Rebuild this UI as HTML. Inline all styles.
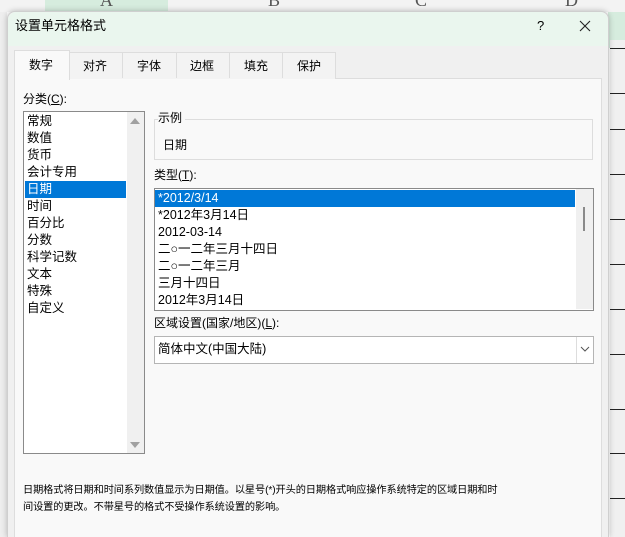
<!DOCTYPE html>
<html style="width:625px;height:537px;overflow:hidden"><head><meta charset="utf-8"><style>
*{margin:0;padding:0;box-sizing:border-box}
body{width:625px;height:537px;overflow:hidden;background:#fff;font-family:"Liberation Sans","Noto Sans CJK SC",sans-serif;font-size:12px;color:#000;position:relative}
.a{position:absolute}
.t{position:absolute;white-space:nowrap;line-height:17px}
</style></head><body>
<div class="a" style="left:0;top:0;width:625px;height:12px;background:#f3f3f3"></div>
<div class="a" style="left:45px;top:0;width:123px;height:12px;background:#d6ecde"></div>
<div class="t" style="left:100px;top:-8px;font-family:'Liberation Serif',serif;font-size:18px;color:#555">A</div>
<div class="t" style="left:268px;top:-8px;font-family:'Liberation Serif',serif;font-size:18px;color:#555">B</div>
<div class="t" style="left:415px;top:-8px;font-family:'Liberation Serif',serif;font-size:18px;color:#555">C</div>
<div class="t" style="left:565px;top:-8px;font-family:'Liberation Serif',serif;font-size:18px;color:#555">D</div>
<div class="a" style="left:608px;top:12px;width:17px;height:36px;background:#d6ecde"></div>
<div class="a" style="left:610px;top:40px;width:15px;height:497px;background:#f0f0f0"></div>
<div class="a" style="left:610px;top:48px;width:15px;border-top:1px solid #222"></div>
<div class="a" style="left:610px;top:93px;width:15px;border-top:1px solid #222"></div>
<div class="a" style="left:610px;top:129px;width:15px;border-top:1px solid #222"></div>
<div class="a" style="left:610px;top:174px;width:15px;border-top:1px solid #222"></div>
<div class="a" style="left:610px;top:219px;width:15px;border-top:1px solid #222"></div>
<div class="a" style="left:610px;top:264px;width:15px;border-top:1px solid #222"></div>
<div class="a" style="left:610px;top:309px;width:15px;border-top:1px solid #222"></div>
<div class="a" style="left:610px;top:354px;width:15px;border-top:1px solid #222"></div>
<div class="a" style="left:610px;top:409px;width:15px;border-top:1px solid #222"></div>
<div class="a" style="left:610px;top:453px;width:15px;border-top:1px solid #222"></div>
<div class="a" style="left:610px;top:498px;width:15px;border-top:1px solid #222"></div>
<div class="a" style="left:0;top:12px;width:7px;height:525px;background:#eee"></div>
<div class="a" style="left:7px;top:11px;width:602px;height:526px;background:#f0f0f0;border:1px solid #cfcfcf;border-bottom:none;border-radius:8px 8px 0 0;box-shadow:0 0 6px rgba(0,0,0,.25)"></div>
<div class="a" style="left:8px;top:12px;width:600px;height:34px;background:#eaf6ee;border-radius:8px 8px 0 0"></div>
<div class="t" style="left:15px;top:17px;font-size:13px">设置单元格格式</div>
<div class="t" style="left:537px;top:17px;font-size:13px">?</div>
<svg class="a" style="left:579px;top:20px" width="12" height="12"><path d="M1 1L11 11M11 1L1 11" stroke="#222" stroke-width="1.1"/></svg>
<div class="a" style="left:14px;top:78px;width:588px;height:459px;background:#f9f9f9;border:1px solid #ddd;border-bottom:none"></div>
<div class="a" style="left:69px;top:52px;width:267px;height:27px;background:#f3f3f3;border:1px solid #ddd;border-bottom:none"></div>
<div class="a" style="left:122px;top:52px;height:26px;border-left:1px solid #ddd"></div>
<div class="a" style="left:176px;top:52px;height:26px;border-left:1px solid #ddd"></div>
<div class="a" style="left:229px;top:52px;height:26px;border-left:1px solid #ddd"></div>
<div class="a" style="left:282px;top:52px;height:26px;border-left:1px solid #ddd"></div>
<div class="a" style="left:14px;top:50px;width:56px;height:30px;background:#f9f9f9;border:1px solid #ddd;border-bottom:none"></div>
<div class="t" style="left:29px;top:57px">数字</div>
<div class="t" style="left:83px;top:58px">对齐</div>
<div class="t" style="left:137px;top:58px">字体</div>
<div class="t" style="left:190px;top:58px">边框</div>
<div class="t" style="left:244px;top:58px">填充</div>
<div class="t" style="left:297px;top:58px">保护</div>
<div class="t" style="left:23px;top:91px">分类(<u>C</u>):</div>
<div class="a" style="left:23px;top:111px;width:122px;height:343px;background:#fff;border:1px solid #8a8a8a"></div>
<div class="a" style="left:127px;top:112px;width:17px;height:341px;background:#f0f0f0"></div>
<svg class="a" style="left:130px;top:117px" width="10" height="8"><path d="M0 7L5 1L10 7Z" fill="#a0a0a0"/></svg>
<svg class="a" style="left:130px;top:441px" width="10" height="8"><path d="M0 1L5 7L10 1Z" fill="#a0a0a0"/></svg>
<div class="a" style="left:25px;top:181px;width:101px;height:17px;background:#0078d7"></div>
<div class="t" style="left:27px;top:113px;font-size:12.5px">常规<br>数值<br>货币<br>会计专用<br><span style="color:#fff">日期</span><br>时间<br>百分比<br>分数<br>科学记数<br>文本<br>特殊<br>自定义</div>
<div class="a" style="left:154px;top:119px;width:439px;height:41px;border:1px solid #ddd"></div>
<div class="t" style="left:158px;top:110px;background:#f9f9f9;padding-right:3px">示例</div>
<div class="t" style="left:163px;top:137px">日期</div>
<div class="t" style="left:154px;top:167px">类型(<u>T</u>):</div>
<div class="a" style="left:154px;top:188px;width:440px;height:123px;background:#fff;border:1px solid #8a8a8a"></div>
<div class="a" style="left:576px;top:189px;width:17px;height:120px;background:#f0f0f0"></div>
<div class="a" style="left:583px;top:207px;width:2px;height:24px;background:#8a8a8a"></div>
<div class="a" style="left:155px;top:190px;width:420px;height:17px;background:#0078d7"></div>
<div class="t" style="left:158px;top:190px;font-size:12.5px"><span style="color:#fff">*2012/3/14</span><br>*2012年3月14日<br>2012-03-14<br>二○一二年三月十四日<br>二○一二年三月<br>三月十四日<br>2012年3月14日</div>
<div class="t" style="left:154px;top:315px">区域设置(国家/地区)(<u>L</u>):</div>
<div class="a" style="left:154px;top:336px;width:440px;height:28px;background:#fff;border:1px solid #b5b5b5"></div>
<div class="a" style="left:576px;top:337px;width:17px;height:26px;border-left:1px solid #ddd"></div>
<svg class="a" style="left:580px;top:346px" width="10" height="7"><path d="M1 1L5 5L9 1" stroke="#555" fill="none"/></svg>
<div class="t" style="left:158px;top:341px;font-size:12.5px">简体中文(中国大陆)</div>
<div class="t" style="left:23px;top:482px;font-size:10.2px;line-height:17px;letter-spacing:-0.1px">日期格式将日期和时间系列数值显示为日期值。以星号(*)开头的日期格式响应操作系统特定的区域日期和时<br>间设置的更改。不带星号的格式不受操作系统设置的影响。</div>
</body></html>
